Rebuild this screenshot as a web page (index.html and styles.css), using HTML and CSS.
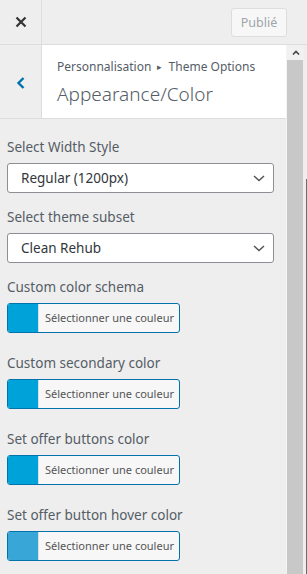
FILE: index.html
```html
<!DOCTYPE html>
<html lang="fr">
<head>
    <meta charset="UTF-8">
    <meta name="viewport" content="width=device-width, initial-scale=1.0">
    <title>Personnalisation</title>
    <link rel="stylesheet" href="styles.css">
</head>
<body>
    <div class="header">
        <div class="close">
            <svg width="12" height="12" viewBox="0 0 12 12"><path d="M1.5 1.5 L10.5 10.5 M10.5 1.5 L1.5 10.5" stroke="#333" stroke-width="2.2"/></svg>
        </div>
        <div class="spacer"></div>
        <button class="publish">Publié</button>
    </div>

    <div class="body">
        <div class="panel">
            <div class="section-head">
                <div class="back">
                    <svg width="10" height="14" viewBox="0 0 10 14"><path d="M7.5 2 L2.5 7 L7.5 12" fill="none" stroke="#0073aa" stroke-width="2.4"/></svg>
                </div>
                <div class="title-box">
                    <div class="crumb">Personnalisation <span class="arrow">&#9656;</span> Theme Options</div>
                    <div class="title">Appearance/Color</div>
                </div>
            </div>

            <div class="content">
                <!-- listes de choix -->
                <div class="field">
                    <label>Select Width Style</label>
                    <div class="select">Regular (1200px)
                        <svg class="chev" width="12" height="7" viewBox="0 0 12 7"><path d="M1 1 L6 5.5 L11 1" fill="none" stroke="#555" stroke-width="1.5"/></svg>
                    </div>
                </div>
                <div class="field">
                    <label>Select theme subset</label>
                    <div class="select">Clean Rehub
                        <svg class="chev" width="12" height="7" viewBox="0 0 12 7"><path d="M1 1 L6 5.5 L11 1" fill="none" stroke="#555" stroke-width="1.5"/></svg>
                    </div>
                </div>

                <!-- couleurs -->
                <div class="color-field">
                    <label>Custom color schema</label>
                    <div class="color-btn"><span class="swatch"></span><span class="pick">Sélectionner une couleur</span></div>
                </div>
                <div class="color-field">
                    <label>Custom secondary color</label>
                    <div class="color-btn"><span class="swatch"></span><span class="pick">Sélectionner une couleur</span></div>
                </div>
                <div class="color-field">
                    <label>Set offer buttons color</label>
                    <div class="color-btn"><span class="swatch"></span><span class="pick">Sélectionner une couleur</span></div>
                </div>
                <div class="color-field">
                    <label>Set offer button hover color</label>
                    <div class="color-btn"><span class="swatch light"></span><span class="pick">Sélectionner une couleur</span></div>
                </div>
            </div>
        </div>

        <div class="scrollbar">
            <div class="up">
                <svg width="8" height="5" viewBox="0 0 8 5"><path d="M1 4.5 L4 1.5 L7 4.5" fill="none" stroke="#444" stroke-width="1.6"/></svg>
            </div>
            <div class="track"></div>
        </div>
        <div class="edge"><div class="dark"></div></div>
    </div>
</body>
</html>
```

FILE: styles.css
```css
body {
    margin: 0;
    font-family: "Noto Sans", "Open Sans", sans-serif;
    background-color: #eeeeee;
    color: #555d66;
    width: 307px;
    height: 574px;
    overflow: hidden;
}
.header {
    display: flex;
    align-items: center;
    height: 44px;
    border-bottom: 1px solid #dddddd;
}
.close {
    width: 42px;
    height: 44px;
    border-right: 1px solid #dddddd;
    display: flex;
    align-items: center;
    justify-content: center;
    box-sizing: border-box;
}
.spacer {
    flex: 1;
}
.publish {
    width: 56px;
    height: 29px;
    margin-right: 20px;
    background-color: #f7f7f7;
    border: 1px solid #dddddd;
    border-radius: 3px;
    color: #a0a5aa;
    font-family: "Noto Sans", sans-serif;
    font-size: 12.5px;
    padding: 0;
}
.body {
    display: flex;
    height: 529px;
}
.panel {
    width: 286px;
}
.section-head {
    display: flex;
    height: 73px;
    border-bottom: 1px solid #dddddd;
}
.back {
    width: 41px;
    border-right: 1px solid #dddddd;
    display: flex;
    align-items: center;
    justify-content: center;
    padding-top: 2px;
}
.title-box {
    flex: 1;
    background-color: #ffffff;
    padding: 13px 0 0 15px;
}
.crumb {
    font-size: 12px;
    line-height: 18px;
    white-space: nowrap;
}
.crumb .arrow {
    font-size: 9px;
    margin: 0 3px;
    position: relative;
    top: -1px;
}
.title {
    font-size: 19px;
    font-weight: 300;
    line-height: 26px;
    margin-top: 4px;
}
.content {
    padding: 18px 0 0 7px;
}
label {
    display: block;
    font-size: 13.5px;
    line-height: 20px;
    color: #555d66;
}
.field {
    margin-bottom: 14px;
}
.select {
    margin-top: 6px;
    width: 267px;
    height: 30px;
    box-sizing: border-box;
    border: 1px solid #8c8f94;
    border-radius: 3px;
    background-color: #ffffff;
    color: #32373c;
    font-size: 13.5px;
    line-height: 28px;
    padding-left: 13px;
    display: flex;
    justify-content: space-between;
    align-items: center;
}
.chev {
    margin-right: 8px;
}
.color-field {
    margin-bottom: 20px;
}
.color-btn {
    margin-top: 6px;
    width: 173px;
    height: 30px;
    box-sizing: border-box;
    border: 1px solid #0073aa;
    border-radius: 3px;
    display: flex;
    overflow: hidden;
    background-color: #f7f7f7;
}
.swatch {
    width: 30px;
    flex-shrink: 0;
    background-color: #00a3d9;
    border-right: 1px solid #dddddd;
}
.swatch.light {
    background-color: #39a6d8;
}
.pick {
    font-size: 11px;
    line-height: 28px;
    padding-left: 6px;
    color: #555555;
    white-space: nowrap;
}
.scrollbar {
    width: 17px;
    display: flex;
    flex-direction: column;
    border-left: 1px solid #f4f4f4;
}
.up {
    height: 15px;
    background-color: #f1f1f1;
    display: flex;
    justify-content: center;
    padding-top: 5px;
    box-sizing: border-box;
}
.track {
    flex: 1;
    background-color: #c8c8c8;
    margin-right: 1px;
}
.edge {
    flex: 1;
    display: flex;
    flex-direction: column;
    justify-content: flex-end;
}
.dark {
    height: 395px;
    background-color: #6e6e68;
    margin-left: 2px;
}
```
